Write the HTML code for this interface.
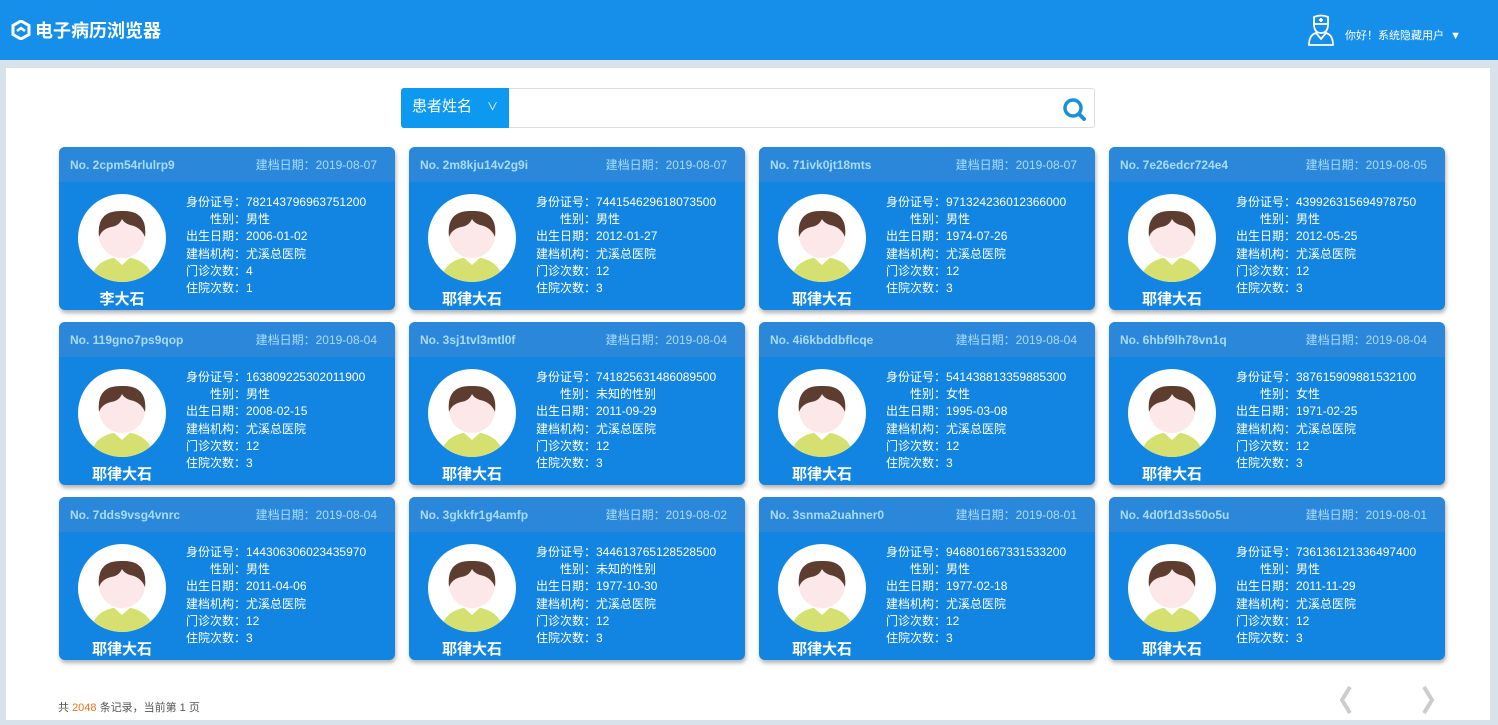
<!DOCTYPE html>
<html><head><meta charset="utf-8"><style>
*{margin:0;padding:0;box-sizing:border-box}
body{width:1498px;height:725px;background:#d8e2ea;font-family:"Liberation Sans","Noto Sans CJK SC",sans-serif;position:relative;overflow:hidden}
.hd{position:absolute;left:0;top:0;width:1498px;height:60px;background:#158fe9}
.logo{position:absolute;left:11px;top:17px;color:#fff;font-size:18px;font-weight:bold;display:flex;align-items:center;gap:4px}
.user{position:absolute;left:1306px;top:14px;color:#fff;font-size:11px;display:flex;align-items:center}
.panel{position:absolute;left:6px;top:68px;width:1484px;height:652px;background:#fff}
.search{position:absolute;left:401px;top:88px;width:694px;height:40px;border:1px solid #ddd;border-radius:3px;background:#fff}
.sel{position:absolute;left:0;top:0;width:108px;height:40px;background:#0d99f0;color:#fff;font-size:15px;line-height:38px;padding-left:11px;border-radius:3px 0 0 3px;margin:-1px}
.card{position:absolute;width:336px;height:163px;background:#1185e1;border-radius:6px;box-shadow:1px 3px 4px rgba(0,0,0,.3);overflow:hidden}
.ch{height:35px;background:#2b87d9;color:#a8dcff;font-size:12px;line-height:36px;padding:0 18px 0 11px;display:flex;justify-content:space-between}
.ch b{font-weight:bold}
.av{position:absolute;left:19px;top:47px}
.nm{position:absolute;left:0;width:126px;top:141px;text-align:center;color:#fff;font-size:15px;font-weight:bold}
.info{position:absolute;left:127px;top:47px;color:#fff;font-size:12px;line-height:17.2px}
.foot{position:absolute;left:58px;top:699px;font-size:11px;color:#555}
</style></head><body>
<div class="hd">
<div class="logo"><svg width="20" height="20" viewBox="0 0 20 20"><path d="M10 1 L18 5.5 L18 14.5 L10 19 L2 14.5 L2 5.5Z" fill="none" stroke="#fff" stroke-width="3"/><path d="M6 11 L10 8 L14 11" fill="none" stroke="#fff" stroke-width="2.5"/></svg>电子病历浏览器</div>
<div class="user"><svg width="30" height="32" viewBox="0 0 30 32" fill="none" stroke="#fff" stroke-width="1.8"><path d="M8 3 Q15 0 22 3 L22 10 L8 10Z"/><path d="M15 4v4M13 6h4"/><path d="M8 10 Q8 19 15 19 Q22 19 22 10"/><path d="M3 31 Q3 21 10 19 L15 25 L20 19 Q27 21 27 31Z"/></svg><span style="margin-left:9px;margin-top:10px">你好！系统隐藏用户 &nbsp;▼</span></div>
</div>
<div class="panel"></div>
<div class="search"><div class="sel">患者姓名 <span style="position:absolute;left:86px;font-size:11px">&#8744;</span></div>
<svg style="position:absolute;right:7px;top:8px" width="25" height="25" viewBox="0 0 25 25"><circle cx="11" cy="11" r="8" fill="none" stroke="#1a8fdc" stroke-width="3.5"/><path d="M17 17 L22 22" stroke="#1a8fdc" stroke-width="4" stroke-linecap="round"/></svg></div>
<div id="cards"></div>
<div class="foot">共 <span style="color:#f07020">2048</span> 条记录，当前第 1 页</div>
<svg style="position:absolute;left:1336px;top:684px" width="20" height="32"><path d="M14 3 L6 16 L14 29" fill="none" stroke="#ccc" stroke-width="4"/></svg>
<svg style="position:absolute;left:1418px;top:684px" width="20" height="32"><path d="M6 3 L14 16 L6 29" fill="none" stroke="#ccc" stroke-width="4"/></svg>
<script>
var d=[["2cpm54rlulrp9","2019-08-07","782143796963751200","男性","2006-01-02","4","1","李大石"],
["2m8kju14v2g9i","2019-08-07","744154629618073500","男性","2012-01-27","12","3"],
["71ivk0jt18mts","2019-08-07","971324236012366000","男性","1974-07-26","12","3"],
["7e26edcr724e4","2019-08-05","439926315694978750","男性","2012-05-25","12","3"],
["119gno7ps9qop","2019-08-04","163809225302011900","男性","2008-02-15","12","3"],
["3sj1tvl3mtl0f","2019-08-04","741825631486089500","未知的性别","2011-09-29","12","3"],
["4i6kbddbflcqe","2019-08-04","541438813359885300","女性","1995-03-08","12","3"],
["6hbf9lh78vn1q","2019-08-04","387615909881532100","女性","1971-02-25","12","3"],
["7dds9vsg4vnrc","2019-08-04","144306306023435970","男性","2011-04-06","12","3"],
["3gkkfr1g4amfp","2019-08-02","344613765128528500","未知的性别","1977-10-30","12","3"],
["3snma2uahner0","2019-08-01","946801667331533200","男性","1977-02-18","12","3"],
["4d0f1d3s50o5u","2019-08-01","736136121336497400","男性","2011-11-29","12","3"]];
var av='<svg class="av" width="88" height="88" viewBox="0 0 88 88"><defs><clipPath id="c"><circle cx="44" cy="44" r="44"/></clipPath></defs><circle cx="44" cy="44" r="44" fill="#fff"/><g clip-path="url(#c)"><path d="M12 88 Q16 64 44 63 Q72 64 76 88Z" fill="#d5e070"/><path d="M34 62 L44 71 L54 62 L52 58 L36 58Z" fill="#fff"/><ellipse cx="44" cy="41" rx="23" ry="23" fill="#fce8e8"/><path d="M21 43 Q18 16 44 17 Q70 16 67 43 Q63 33 52 31 Q46 29 44 25 Q41 32 33 33 Q24 35 21 43Z" fill="#5d3d2f"/></g></svg>';
var h='';
d.forEach(function(r,i){var x=59+(i%4)*350,y=147+Math.floor(i/4)*175;
h+='<div class="card" style="left:'+x+'px;top:'+y+'px"><div class="ch"><b>No. '+r[0]+'</b><span>建档日期：'+r[1]+'</span></div>'+av+
'<div class="nm">'+(r[7]||'耶律大石')+'</div><div class="info">身份证号：'+r[2]+'<br>&emsp;&emsp;性别：'+r[3]+'<br>出生日期：'+r[4]+'<br>建档机构：尤溪总医院<br>门诊次数：'+r[5]+'<br>住院次数：'+r[6]+'</div></div>';});
document.getElementById('cards').innerHTML=h;
</script>
</body></html>
